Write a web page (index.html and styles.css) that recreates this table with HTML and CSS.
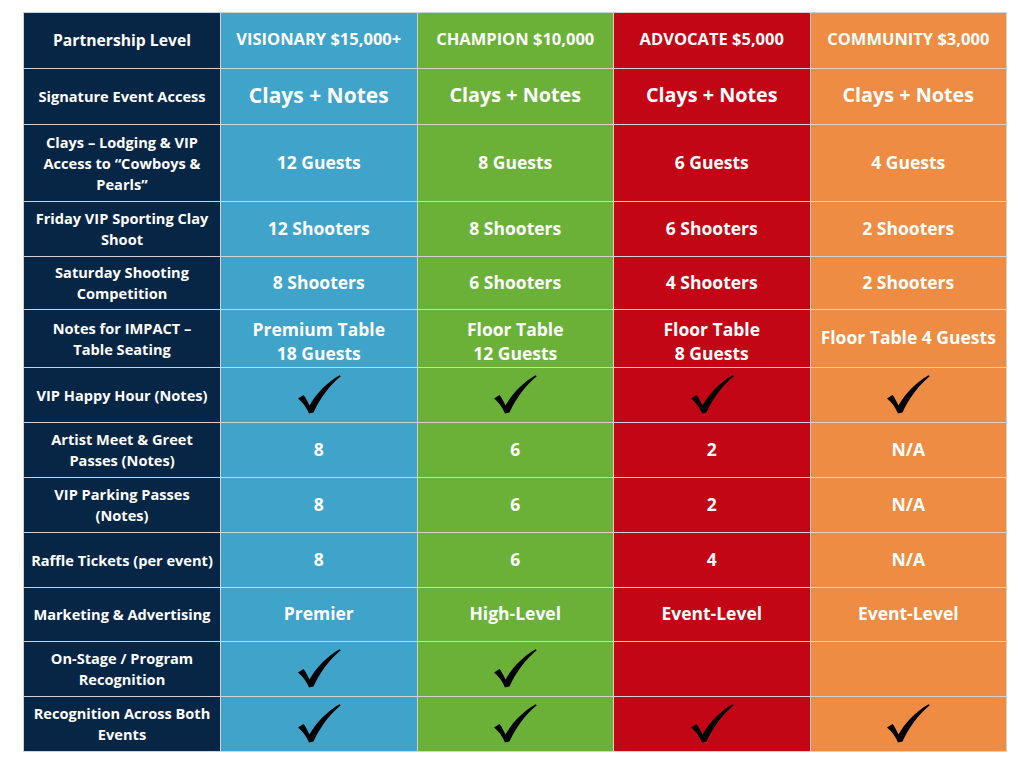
FILE: index.html
```html
<!DOCTYPE html>
<html lang="en">
<head>
<meta charset="utf-8">
<title>Partnership Levels</title>
<link rel="stylesheet" href="styles.css">
</head>
<body>
<svg class="defs" width="0" height="0" aria-hidden="true">
  <symbol id="check" viewBox="0 0 44 40">
    <path d="M1 24.5 L6.5 21 C9 24 10.5 27.5 12.5 31.5 C19 20 29 9 42.5 1.2 L43.8 2.2 C32 12 23 24.5 16.5 38.5 L12 39.5 C9.5 33.5 6 28.5 1 24.5 Z" fill="#000"/>
  </symbol>
</svg>
<div class="page">
  <div class="grid">
    <div class="lbl top">Partnership Level</div>
    <div class="c blue head">VISIONARY $15,000+</div>
    <div class="c green head">CHAMPION $10,000</div>
    <div class="c red head">ADVOCATE $5,000</div>
    <div class="c orange head">COMMUNITY $3,000</div>

    <div class="lbl">Signature Event Access</div>
    <div class="c blue big wide">Clays + Notes</div>
    <div class="c green big">Clays + Notes</div>
    <div class="c red big">Clays + Notes</div>
    <div class="c orange big">Clays + Notes</div>

    <div class="lbl">Clays – Lodging &amp; VIP Access to “Cowboys &amp; Pearls”</div>
    <div class="c blue">12 Guests</div>
    <div class="c green">8 Guests</div>
    <div class="c red">6 Guests</div>
    <div class="c orange">4 Guests</div>

    <div class="lbl">Friday VIP Sporting Clay Shoot</div>
    <div class="c blue">12 Shooters</div>
    <div class="c green">8 Shooters</div>
    <div class="c red">6 Shooters</div>
    <div class="c orange">2 Shooters</div>

    <div class="lbl">Saturday Shooting Competition</div>
    <div class="c blue">8 Shooters</div>
    <div class="c green">6 Shooters</div>
    <div class="c red">4 Shooters</div>
    <div class="c orange">2 Shooters</div>

    <div class="lbl">Notes for IMPACT –<br>Table Seating</div>
    <div class="c blue two">Premium Table<br>18 Guests</div>
    <div class="c green two">Floor Table<br>12 Guests</div>
    <div class="c red two">Floor Table<br>8 Guests</div>
    <div class="c orange">Floor Table 4 Guests</div>

    <div class="lbl">VIP Happy Hour (Notes)</div>
    <div class="c blue"><svg class="chk"><use href="#check"/></svg></div>
    <div class="c green"><svg class="chk"><use href="#check"/></svg></div>
    <div class="c red"><svg class="chk"><use href="#check"/></svg></div>
    <div class="c orange"><svg class="chk"><use href="#check"/></svg></div>

    <div class="lbl">Artist Meet &amp; Greet Passes (Notes)</div>
    <div class="c blue">8</div>
    <div class="c green">6</div>
    <div class="c red">2</div>
    <div class="c orange">N/A</div>

    <div class="lbl">VIP Parking Passes (Notes)</div>
    <div class="c blue">8</div>
    <div class="c green">6</div>
    <div class="c red">2</div>
    <div class="c orange">N/A</div>

    <div class="lbl">Raffle Tickets (per event)</div>
    <div class="c blue">8</div>
    <div class="c green">6</div>
    <div class="c red">4</div>
    <div class="c orange">N/A</div>

    <div class="lbl">Marketing &amp; Advertising</div>
    <div class="c blue">Premier</div>
    <div class="c green">High-Level</div>
    <div class="c red">Event-Level</div>
    <div class="c orange">Event-Level</div>

    <div class="lbl">On-Stage / Program Recognition</div>
    <div class="c blue"><svg class="chk"><use href="#check"/></svg></div>
    <div class="c green"><svg class="chk"><use href="#check"/></svg></div>
    <div class="c red"></div>
    <div class="c orange"></div>

    <div class="lbl">Recognition Across Both Events</div>
    <div class="c blue"><svg class="chk"><use href="#check"/></svg></div>
    <div class="c green"><svg class="chk"><use href="#check"/></svg></div>
    <div class="c red"><svg class="chk"><use href="#check"/></svg></div>
    <div class="c orange"><svg class="chk"><use href="#check"/></svg></div>
  </div>
</div>
</body>
</html>
```

FILE: styles.css
```css
html, body {
  margin: 0;
  padding: 0;
  background: #ffffff;
}

.defs {
  position: absolute;
  width: 0;
  height: 0;
  overflow: hidden;
}

.page {
  padding: 12px 0 0 23px;
}

.grid {
  width: 984px;
  box-sizing: border-box;
  display: grid;
  grid-template-columns: 196px repeat(4, 1fr);
  grid-template-rows: 55px 55px 76px 54px 52px 57px 54px 54px 54px 54px 53px 54px 54px;
  gap: 1px;
  padding: 1px;
  background: #d2d2d2;
  font-family: "Open Sans", "Liberation Sans", sans-serif;
  color: #ffffff;
}

.lbl {
  background: #072545;
  display: flex;
  align-items: center;
  justify-content: center;
  text-align: center;
  padding: 0 6px;
  font-size: 14.6px;
  font-weight: 700;
  line-height: 21px;
}

.lbl.top {
  font-size: 15.7px;
}

.c {
  display: flex;
  align-items: center;
  justify-content: center;
  text-align: center;
  padding-bottom: 3px;
  font-size: 17.5px;
  font-weight: 700;
  line-height: 24px;
}

.c.two {
  padding-top: 8px;
}

.head {
  font-size: 16.5px;
}

.big {
  font-size: 19.8px;
}

.big.wide {
  font-size: 21px;
}

.blue { background: #3fa3ca; }
.green { background: #6bb138; }
.red { background: #c20616; }
.orange { background: #ed8c42; }

.chk {
  width: 44px;
  height: 40px;
  display: block;
}
```
